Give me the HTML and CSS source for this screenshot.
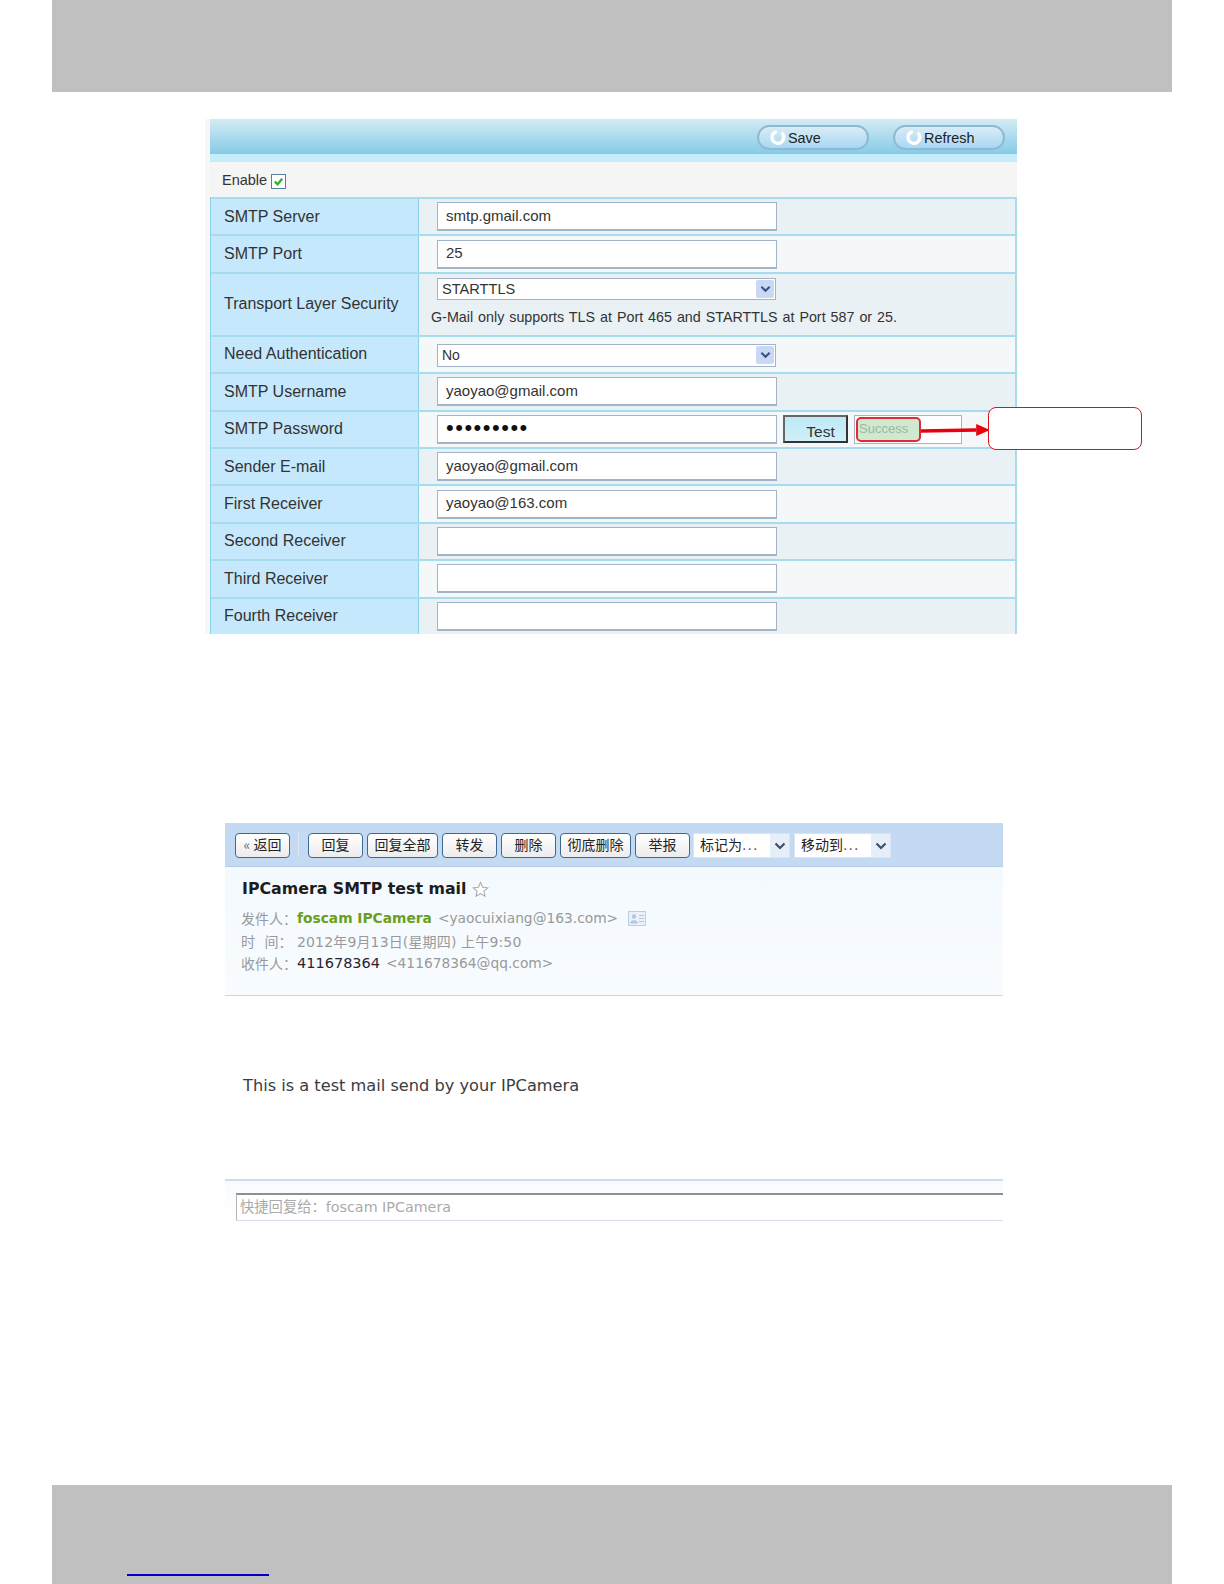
FILE: index.html
```html
<!DOCTYPE html>
<html lang="en">
<head>
<meta charset="utf-8">
<title>SMTP settings</title>
<link rel="stylesheet" href="styles.css">
</head>
<body>
<div class="page">
  <header class="band band-top"></header>
  <main class="main">
    <section class="panel">
      <div class="bar">
        <button class="pill" type="button"><svg class="swirl" viewBox="0 0 20 20"><path d="M15 4.500A7 7 0 1 1 9 3" fill="none" stroke="#fff" stroke-width="4"/></svg><span class="pill-save">Save</span></button>
        <button class="pill" type="button"><svg class="swirl" viewBox="0 0 20 20"><path d="M15 4.500A7 7 0 1 1 9 3" fill="none" stroke="#fff" stroke-width="4"/></svg><span>Refresh</span></button>
      </div>
      <div class="bar-strip"></div>
      <div class="enable"><span>Enable</span><span class="check"><svg viewBox="0 0 14 14"><path d="M3 7l3 3 5-6" fill="none" stroke="#2bb02b" stroke-width="2.400"/></svg></span></div>
      <div class="form">
        <div class="row"><div class="label">SMTP Server</div><div class="cell"><input class="field" type="text" value="smtp.gmail.com"></div></div>
        <div class="row alt"><div class="label">SMTP Port</div><div class="cell"><input class="field" type="text" value="25"></div></div>
        <div class="row tall"><div class="label">Transport Layer Security</div><div class="cell stack">
          <div class="select"><span>STARTTLS</span><span class="drop"><svg viewBox="0 0 12 8"><path d="M1.500 1.500L6 6l4.500-4.500" fill="none" stroke="#3c4f78" stroke-width="2.200"/></svg></span></div>
          <p class="note">G-Mail only supports TLS at Port 465 and STARTTLS at Port 587 or 25.</p>
        </div></div>
        <div class="row alt"><div class="label">Need Authentication</div><div class="cell"><div class="select select-b"><span>No</span><span class="drop"><svg viewBox="0 0 12 8"><path d="M1.500 1.500L6 6l4.500-4.500" fill="none" stroke="#3c4f78" stroke-width="2.200"/></svg></span></div></div></div>
        <div class="row"><div class="label">SMTP Username</div><div class="cell"><input class="field" type="text" value="yaoyao@gmail.com"></div></div>
        <div class="row alt"><div class="label">SMTP Password</div><div class="cell">
          <input class="field pass" type="password" value="123456789">
          <button class="test" type="button">Test</button>
          <div class="result"><span class="success">Success</span></div>
        </div></div>
        <div class="row"><div class="label">Sender E-mail</div><div class="cell"><input class="field" type="text" value="yaoyao@gmail.com"></div></div>
        <div class="row alt"><div class="label">First Receiver</div><div class="cell"><input class="field" type="text" value="yaoyao@163.com"></div></div>
        <div class="row"><div class="label">Second Receiver</div><div class="cell"><input class="field" type="text"></div></div>
        <div class="row alt"><div class="label">Third Receiver</div><div class="cell"><input class="field" type="text"></div></div>
        <div class="row"><div class="label">Fourth Receiver</div><div class="cell"><input class="field" type="text"></div></div>
      </div>
      <svg class="arrow" viewBox="0 0 70 14"><path d="M0 8L56 7" stroke="#e8000c" stroke-width="3.400" fill="none"/><path d="M56 1L70 7 56 13z" fill="#e8000c"/></svg>
      <div class="callout"></div>
    </section>

    <section class="mail">
      <div class="tools">
        <button class="tb tb-back" type="button"><span class="quote">«</span> 返回</button>
        <span class="sep"></span>
        <button class="tb" type="button">回复</button>
        <button class="tb tb-wide" type="button">回复全部</button>
        <button class="tb" type="button">转发</button>
        <button class="tb" type="button">删除</button>
        <button class="tb tb-wide" type="button">彻底删除</button>
        <button class="tb" type="button">举报</button>
        <div class="menu"><span>标记为<span class="dots">...</span></span><span class="menu-drop"><svg viewBox="0 0 12 8"><path d="M1.500 1.500L6 6l4.500-4.500" fill="none" stroke="#3b4f66" stroke-width="2.200"/></svg></span></div>
        <div class="menu"><span>移动到<span class="dots">...</span></span><span class="menu-drop"><svg viewBox="0 0 12 8"><path d="M1.500 1.500L6 6l4.500-4.500" fill="none" stroke="#3b4f66" stroke-width="2.200"/></svg></span></div>
      </div>
      <div class="head">
        <h1 class="subject">IPCamera SMTP test mail<svg class="star" viewBox="0 0 16 16"><path d="M8 1.500l2 4.400 4.800.5-3.600 3.200 1 4.700L8 11.900l-4.200 2.400 1-4.700L1.200 6.400 6 5.900z" fill="#fff" stroke="#a9a9a9"/></svg></h1>
        <div class="meta"><span class="key">发件人：</span><b class="sender">foscam IPCamera</b><span class="addr addr-gap">&lt;yaocuixiang@163.com&gt;</span><svg class="card" viewBox="0 0 18 15"><rect x=".5" y=".5" width="17" height="14" fill="#eaf1fa" stroke="#bccde2"/><circle cx="6" cy="5.500" r="2.200" fill="#b4c7de"/><path d="M2.500 12c0-3 7-3 7 0zM11 4.500h5M11 7.500h5M11 10.500h5" fill="#b4c7de" stroke="#b4c7de"/></svg></div>
        <div class="meta"><span class="key">时&nbsp;&nbsp;&nbsp;间：</span><span class="time">2012年9月13日(星期四) 上午9:50</span></div>
        <div class="meta"><span class="key">收件人：</span><span class="to">411678364</span><span class="addr addr-gap">&lt;411678364@qq.com&gt;</span></div>
      </div>
      <div class="body">This is a test mail send by your IPCamera</div>
      <div class="reply"><div class="reply-box">快捷回复给：foscam IPCamera</div></div>
    </section>
  </main>
  <footer class="band band-bottom"><span class="link"></span></footer>
</div>
</body>
</html>
```

FILE: styles.css
```css
* { box-sizing: border-box; }
html, body { margin: 0; padding: 0; background: #fff; }
.page {
  height: 1584px;
  display: flex;
  flex-direction: column;
  overflow: hidden;
  font-family: "Liberation Sans", Arial, sans-serif;
  color: #333;
}
.band { margin: 0 52px; background: #c0c0c0; }
.band-top { height: 92px; flex: none; }
.band-bottom { height: 99px; flex: none; padding: 89px 0 0 75px; }
.link { display: block; width: 142px; height: 2px; background: #0000c8; }
.main { flex: 1; min-height: 0; }

/* settings panel */
.panel {
  position: relative;
  width: 807px;
  margin: 27px 0 0 210px;
  box-shadow: -5px 0 0 #f7f7f7;
}
.bar {
  height: 35px;
  display: flex;
  justify-content: flex-end;
  gap: 24px;
  padding: 6px 12px 0 0;
  background: linear-gradient(#d3ecf4, #86cae7);
}
.bar-strip { height: 8px; background: #c4ecfa; }
.pill {
  width: 112px;
  height: 25px;
  padding: 0 0 0 10px;
  display: flex;
  align-items: center;
  border: 2px solid #8fb9d2;
  border-radius: 13px;
  background: linear-gradient(#d9ecf6, #a8d8f3);
  font: 14.400px "Liberation Sans", Arial, sans-serif;
  color: #222;
}
.swirl { width: 17px; height: 17px; margin-right: 2px; flex: none; }
.enable {
  height: 35px;
  display: flex;
  align-items: center;
  gap: 4px;
  padding-left: 12px;
  background: #f5f5f5;
  font-size: 14.500px;
}
.check {
  width: 15px;
  height: 15px;
  margin-top: 3px;
  border: 1px solid #56809f;
  background: #fff;
  display: block;
}
.check svg { display: block; width: 13px; height: 13px; }
.form {
  height: 437px;
  overflow: hidden;
  border-left: 1px solid #8ad0ea;
  border-right: 2px solid #a8dcec;
}
.row {
  height: 37.400px;
  display: flex;
  border-top: 2px solid #a5dcee;
  background: #e9f1f5;
}
.row.alt { background: #f4f8f9; }
.row.tall { height: 63px; }
.label {
  width: 208px;
  flex: none;
  display: flex;
  align-items: center;
  padding-left: 13px;
  background: #c5e8fc;
  border-right: 1px solid #8ad0ea;
  font-size: 16px;
}
.cell {
  flex: 1;
  display: flex;
  align-items: center;
  padding-left: 18px;
  min-width: 0;
}
.stack { flex-direction: column; align-items: flex-start; }
.field {
  width: 340px;
  height: 29px;
  padding: 0 8px 2px;
  border: 1px solid #a4b4c8;
  border-bottom-width: 2px;
  background: #fff;
  font: 15px "Liberation Sans", Arial, sans-serif;
  color: #333;
  outline: none;
}
.pass { font-size: 22px; letter-spacing: 1.500px; color: #111; }
.select {
  width: 339px;
  height: 22px;
  margin-top: 4px;
  flex: none;
  display: flex;
  align-items: center;
  justify-content: space-between;
  padding: 0 1px 0 4px;
  border: 1px solid #a4b4c8;
  background: #fff;
  font-size: 14.600px;
}
.select-b { height: 23px; margin-top: 2px; font-size: 14px; }
.drop {
  width: 18px;
  height: 18px;
  display: flex;
  align-items: center;
  justify-content: center;
  background: #c9d8f5;
  border-radius: 2px;
}
.drop svg { width: 11px; height: 8px; }
.note {
  margin: 9px 0 0 -6px;
  font-size: 14.300px;
  word-spacing: 1px;
  white-space: nowrap;
}
.test {
  width: 65px;
  height: 28px;
  margin-left: 6px;
  padding: 5px 0 0 10px;
  border: 2px solid #333;
  border-color: #666 #333 #333 #666;
  background: linear-gradient(#bde9f6, #d0eff8);
  font: 15.500px "Liberation Sans", Arial, sans-serif;
  color: #333;
}
.result {
  width: 108px;
  height: 29px;
  margin-left: 6px;
  padding: 1px;
  border: 1px solid #aab4c4;
  background: #fff;
}
.success {
  display: block;
  width: 65px;
  height: 25px;
  line-height: 20px;
  padding-left: 1px;
  border: 2px solid #e02a36;
  border-radius: 5px;
  background: #cfe9cf;
  color: #a0b4a8;
  font-size: 13px;
}
.arrow {
  position: absolute;
  left: 711px;
  top: 304px;
  width: 69px;
  height: 14px;
}
.callout {
  position: absolute;
  left: 778px;
  top: 288px;
  width: 154px;
  height: 43px;
  border: 1.500px solid #d8121e;
  border-radius: 8px;
  background: #fff;
}

/* mail */
.mail {
  width: 778px;
  margin: 189px 0 0 225px;
  font-family: "DejaVu Sans", Verdana, "Noto Sans CJK SC", sans-serif;
}
.tools {
  height: 44px;
  display: flex;
  align-items: flex-start;
  gap: 4px;
  padding: 10px 0 0 10px;
  background: #c4daf2;
  border-bottom: 1px solid #b4cce6;
}
.tb {
  width: 55px;
  height: 25px;
  padding: 0 0 3px;
  flex: none;
  border: 1.500px solid #3d6a92;
  border-radius: 4px;
  background: linear-gradient(#fff, #ececec);
  font: 14px "Noto Sans CJK SC", sans-serif;
  color: #222;
}
.tb-wide { width: 71px; }
.quote { color: #667; }
.sep {
  width: 1px;
  height: 24px;
  margin: 0 5px 0 4px;
  background: #dde7f2;
}
.menu {
  width: 97px;
  height: 25px;
  flex: none;
  margin-left: -1px;
  display: flex;
  align-items: center;
  justify-content: space-between;
  padding: 0 0 4px 6px;
  background: #fff;
  border: 1px solid #d8e4f2;
  font: 14px "Noto Sans CJK SC", sans-serif;
  color: #222;
}
.menu + .menu { margin-left: 0; }
.dots { font-family: "DejaVu Sans", sans-serif; letter-spacing: 1px; color: #555; }
.menu-drop {
  width: 19px;
  height: 23px;
  margin-bottom: -4px;
  display: flex;
  align-items: center;
  justify-content: center;
  background: #e6eefa;
}
.menu-drop svg { width: 12px; height: 8px; }
.head {
  height: 129px;
  padding: 11px 0 0 16px;
  background: linear-gradient(#f4f9fe, #f8fcff);
  border-bottom: 1px solid #c6d7f0;
}
.subject {
  margin: 0 0 7px;
  display: flex;
  align-items: center;
  gap: 6px;
  padding-left: 1px;
  font-size: 15.800px;
  line-height: 22px;
  color: #1c1c1c;
  white-space: pre;
}
.star { width: 17px; height: 17px; }
.meta {
  height: 22.500px;
  display: flex;
  align-items: center;
  font-size: 14px;
  color: #999;
  white-space: pre;
}
.key { width: 56px; flex: none; font-family: "Noto Sans CJK SC", sans-serif; color: #999; }
.sender { color: #6a9f1e; font-size: 13.800px; }
.to { color: #2a2233; font-size: 14.500px; }
.addr { color: #999; font-size: 13.800px; }
.addr-gap { margin-left: 6px; }
.time { color: #999; letter-spacing: .15px; }
.card { width: 18px; height: 15px; margin-left: 10px; }
.body {
  height: 183px;
  padding: 80px 0 0 18px;
  font-size: 16.200px;
  line-height: 20px;
  color: #3b3b40;
}
.reply {
  height: 44px;
  padding: 12px 0 0 11px;
  background: linear-gradient(#f8fbfe, #fff);
  border-top: 2px solid #cfddf3;
}
.reply-box {
  height: 28px;
  border: 1px solid #b5b5b5;
  border-top: 2px solid #8f8f8f;
  border-right: 0;
  border-bottom-color: #dde;
  padding-left: 3px;
  background: #fff;
  font-size: 14.300px;
  line-height: 24px;
  color: #aaa;
}
```
